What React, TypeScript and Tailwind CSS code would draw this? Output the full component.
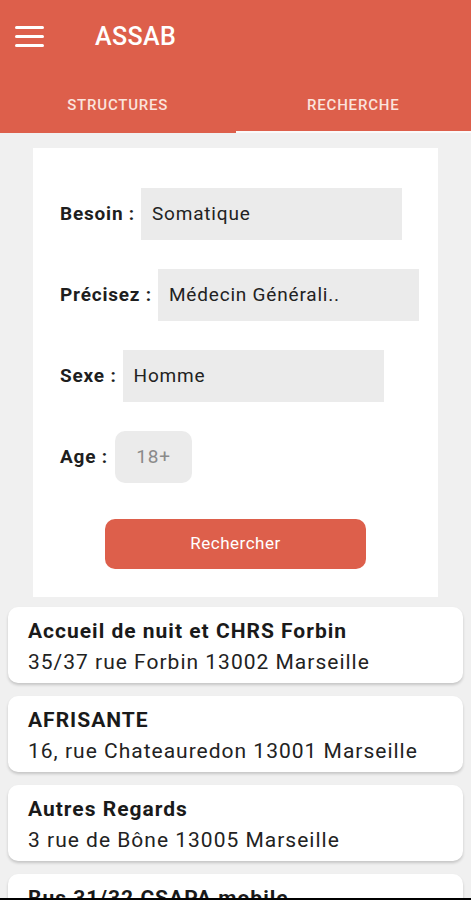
import React from "react";

const structures = [
  { name: "Accueil de nuit et CHRS Forbin", address: "35/37 rue Forbin 13002 Marseille" },
  { name: "AFRISANTE", address: "16, rue Chateauredon 13001 Marseille" },
  { name: "Autres Regards", address: "3 rue de Bône 13005 Marseille" },
  { name: "Bus 31/32 CSAPA mobile", address: "" },
];

function Field({ label, value }: { label: string; value: string }) {
  return (
    <div className="flex items-center h-[52px]">
      <span className="text-[19px] tracking-[0.8px] font-bold text-[#1e1e1e] pr-[6px]">{label}</span>
      <div className="h-[52px] w-[261px] bg-[#ebebeb] flex items-center pl-[11px] text-[19px] tracking-[0.8px] text-[#222]">
        {value}
      </div>
    </div>
  );
}

export default function App() {
  return (
    <div
      className="w-[471px] h-[900px] overflow-hidden flex flex-col bg-[#f0f0f0]"
      style={{ fontFamily: "Roboto, 'Noto Sans', sans-serif" }}
    >
      {/* Header */}
      <div className="bg-[#dd5f4b] shrink-0">
        <div className="h-[75px] flex items-center pl-[15px]">
          <div className="flex flex-col gap-[6px] w-[29px] -mt-[3px]">
            <span className="h-[3px] rounded-full bg-white" />
            <span className="h-[3px] rounded-full bg-white" />
            <span className="h-[3px] rounded-full bg-white" />
          </div>
          <span className="ml-[51px] text-white text-[25px] tracking-[0.4px] font-medium -mt-[1px]">ASSAB</span>
        </div>
        <div className="flex h-[58px]">
          <div className="flex-1 flex flex-col">
            <div className="flex-1 flex items-center justify-center text-[15px] tracking-[0.8px] font-medium text-[#fbe3dd] mt-[4px]">
              STRUCTURES
            </div>
            <div className="h-[2px]" />
          </div>
          <div className="flex-1 flex flex-col">
            <div className="flex-1 flex items-center justify-center text-[15px] tracking-[0.8px] font-medium text-[#fbe3dd] mt-[4px]">
              RECHERCHE
            </div>
            <div className="h-[2px] bg-[#fafafa]" />
          </div>
        </div>
      </div>

      {/* Form */}
      <div className="mx-[33px] mt-[15px] w-[405px] h-[449px] bg-white shrink-0 pl-[27px] pt-[40px]">
        <div className="flex flex-col gap-[29px]">
          <Field label="Besoin :" value="Somatique" />
          <Field label="Précisez :" value="Médecin Générali.." />
          <Field label="Sexe :" value="Homme" />
          <div className="flex items-center h-[52px]">
            <span className="text-[19px] tracking-[0.8px] font-bold text-[#1e1e1e] pr-[7px]">Age :</span>
            <div className="h-[52px] w-[77px] rounded-[10px] bg-[#ebebeb] flex items-center justify-center text-[19px] tracking-[0.8px] text-[#8a8a8a]">
              18+
            </div>
          </div>
        </div>
        <div className="ml-[45px] mt-[36px] w-[261px] h-[50px] rounded-[10px] bg-[#dd5f4b] flex items-center justify-center text-white text-[17px] tracking-[0.5px]">
          Rechercher
        </div>
      </div>

      {/* List */}
      <div className="flex-1 overflow-hidden px-[8px] pt-[10px] flex flex-col gap-[13px]">
        {structures.map((s) => (
          <div
            key={s.name}
            className="shrink-0 h-[76px] rounded-[10px] bg-white shadow-[0_2px_3px_rgba(0,0,0,0.18)] px-[20px] pt-[11px]"
          >
            <div className="text-[21px] tracking-[1px] font-bold text-[#1a1a1a] leading-[26px]">{s.name}</div>
            <div className="text-[21px] tracking-[1px] text-[#222] leading-[26px] mt-[5px]">{s.address}</div>
          </div>
        ))}
      </div>
      <div className="h-[2px] bg-black shrink-0" />
    </div>
  );
}
